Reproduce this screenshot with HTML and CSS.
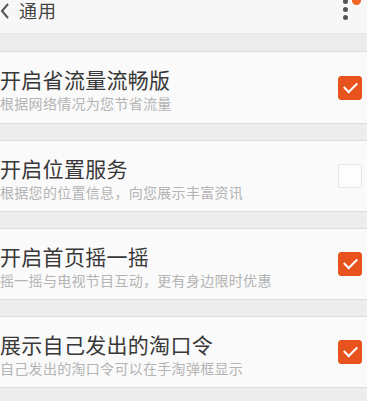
FILE: index.html
```html
<!DOCTYPE html>
<html lang="zh-CN">

<head>
    <meta charset="UTF-8">
    <meta name="viewport" content="width=device-width, initial-scale=1.0">
    <title>通用</title>
    <link rel="stylesheet" href="styles.css">
</head>

<body>
    <header class="top-bar">
        <div class="back">
            <svg class="chevron" width="10" height="16" viewBox="0 0 10 16">
                <polyline points="8,1 2,8 8,15" fill="none" stroke="#555" stroke-width="2" />
            </svg>
            <h1>通用</h1>
        </div>
        <div class="more">
            <span class="dot"></span>
            <span class="dot"></span>
            <span class="dot"></span>
            <span class="badge"></span>
        </div>
    </header>

    <div class="band"></div>

    <section class="settings">
        <div class="item">
            <div class="content">
                <h3>开启省流量流畅版</h3>
                <p>根据网络情况为您节省流量</p>
            </div>
            <span class="check on"></span>
        </div>

        <div class="item">
            <div class="content">
                <h3>开启位置服务</h3>
                <p>根据您的位置信息，向您展示丰富资讯</p>
            </div>
            <span class="check"></span>
        </div>

        <div class="item">
            <div class="content">
                <h3>开启首页摇一摇</h3>
                <p>摇一摇与电视节目互动，更有身边限时优惠</p>
            </div>
            <span class="check on"></span>
        </div>

        <div class="item">
            <div class="content">
                <h3>展示自己发出的淘口令</h3>
                <p>自己发出的淘口令可以在手淘弹框显示</p>
            </div>
            <span class="check on"></span>
        </div>
    </section>
</body>

</html>
```

FILE: styles.css
```css
* {
    box-sizing: border-box;
    margin: 0;
    padding: 0;
    font-family: "Noto Sans CJK SC", "Noto Sans", sans-serif;
}

body {
    background: #ededed;
    color: #333;
    width: 367px;
    height: 401px;
    overflow: hidden;
}

.top-bar {
    display: flex;
    justify-content: space-between;
    align-items: flex-start;
    height: 34px;
    background: #f7f7f7;
    border-bottom: 1px solid #e6e6e6;
}

.back {
    display: flex;
    align-items: center;
    height: 20px;
    padding-top: 1px;
}

.chevron {
    margin: 0 9px 0 0;
}

.top-bar h1 {
    font-size: 18px;
    font-weight: 400;
    color: #444;
    line-height: 19px;
    letter-spacing: 1px;
}

.more {
    position: relative;
    display: flex;
    flex-direction: column;
    gap: 3px;
    width: 24px;
}

.dot {
    width: 5px;
    height: 5px;
    border-radius: 50%;
    background: #555;
}

.more .dot:first-child {
    margin-top: -1px;
}

.badge {
    position: absolute;
    left: 9px;
    top: -4px;
    width: 9px;
    height: 9px;
    border-radius: 50%;
    background: #f26522;
}

.band {
    height: 18px;
    background: #ececec;
    border-bottom: 1px solid #dcdcdc;
}

.settings {
    display: flex;
    flex-direction: column;
    gap: 16px;
}

.item {
    display: flex;
    align-items: center;
    justify-content: space-between;
    height: 72px;
    background: #fafafa;
    border-bottom: 1px solid #dcdcdc;
    padding: 0 5px 0 0;
}

.item + .item {
    border-top: 1px solid #dcdcdc;
}

.item .content {
    padding-top: 4px;
}

.item h3 {
    font-size: 21px;
    font-weight: 400;
    color: #383838;
    line-height: 26px;
    letter-spacing: 0.3px;
}

.item p {
    font-size: 14px;
    color: #b4b4b4;
    line-height: 20px;
    margin-top: 1px;
    letter-spacing: 0.3px;
}

.check {
    width: 24px;
    height: 24px;
    border-radius: 3px;
    background: #fdfdfd;
    border: 1px solid #e6e6e6;
    position: relative;
}

.check.on {
    background: #e8531d;
    border-color: #e8531d;
}

.check.on::after {
    content: "";
    position: absolute;
    left: 5px;
    top: 5px;
    width: 11px;
    height: 6px;
    border-left: 2.5px solid #fff;
    border-bottom: 2.5px solid #fff;
    transform: rotate(-45deg);
}
```
